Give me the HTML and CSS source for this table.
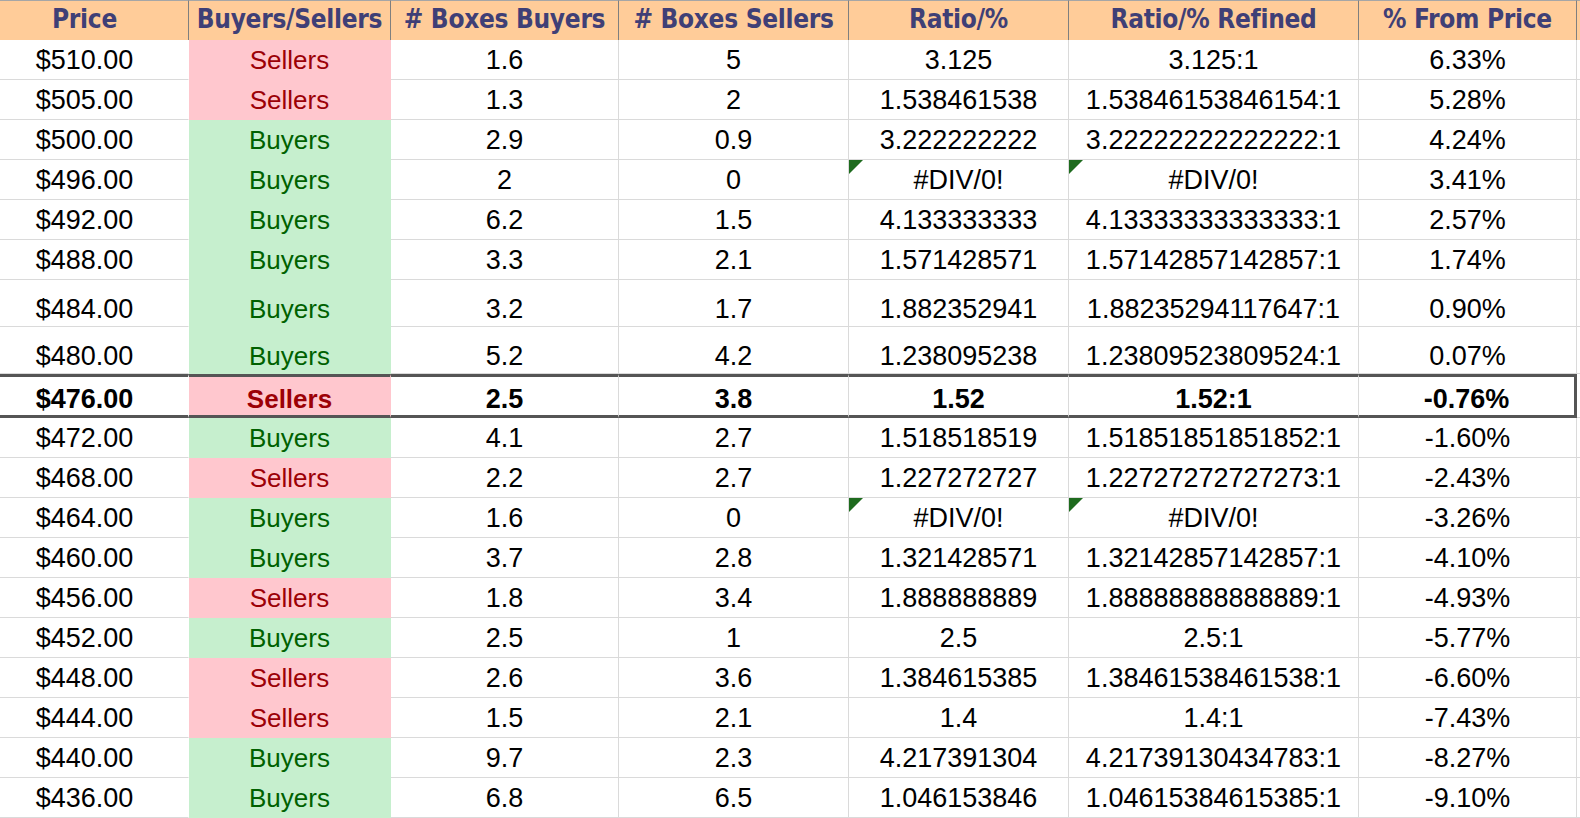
FILE: index.html
```html
<!DOCTYPE html>
<html lang="en">
<head>
<meta charset="utf-8">
<title>Price levels</title>
<link rel="stylesheet" href="styles.css">
</head>
<body>
<div class="sheet">
  <div class="row head">
    <div class="cell">Price</div>
    <div class="cell">Buyers/Sellers</div>
    <div class="cell"># Boxes Buyers</div>
    <div class="cell"># Boxes Sellers</div>
    <div class="cell">Ratio/%</div>
    <div class="cell">Ratio/% Refined</div>
    <div class="cell">% From Price</div>
    <div class="cell fill"></div>
  </div>

  <div class="row"><div class="cell price">$510.00</div><div class="cell bs sell">Sellers</div><div class="cell">1.6</div><div class="cell">5</div><div class="cell">3.125</div><div class="cell">3.125:1</div><div class="cell last">6.33%</div><div class="cell fill"></div></div>
  <div class="row"><div class="cell price">$505.00</div><div class="cell bs sell">Sellers</div><div class="cell">1.3</div><div class="cell">2</div><div class="cell">1.538461538</div><div class="cell">1.53846153846154:1</div><div class="cell last">5.28%</div><div class="cell fill"></div></div>
  <div class="row"><div class="cell price">$500.00</div><div class="cell bs buy">Buyers</div><div class="cell">2.9</div><div class="cell">0.9</div><div class="cell">3.222222222</div><div class="cell">3.22222222222222:1</div><div class="cell last">4.24%</div><div class="cell fill"></div></div>
  <div class="row"><div class="cell price">$496.00</div><div class="cell bs buy">Buyers</div><div class="cell">2</div><div class="cell">0</div><div class="cell err"><span class="flag"></span>#DIV/0!</div><div class="cell err"><span class="flag"></span>#DIV/0!</div><div class="cell last">3.41%</div><div class="cell fill"></div></div>
  <div class="row"><div class="cell price">$492.00</div><div class="cell bs buy">Buyers</div><div class="cell">6.2</div><div class="cell">1.5</div><div class="cell">4.133333333</div><div class="cell">4.13333333333333:1</div><div class="cell last">2.57%</div><div class="cell fill"></div></div>
  <div class="row"><div class="cell price">$488.00</div><div class="cell bs buy">Buyers</div><div class="cell">3.3</div><div class="cell">2.1</div><div class="cell">1.571428571</div><div class="cell">1.57142857142857:1</div><div class="cell last">1.74%</div><div class="cell fill"></div></div>
  <div class="row tall"><div class="cell price">$484.00</div><div class="cell bs buy">Buyers</div><div class="cell">3.2</div><div class="cell">1.7</div><div class="cell">1.882352941</div><div class="cell">1.88235294117647:1</div><div class="cell last">0.90%</div><div class="cell fill"></div></div>
  <div class="row tall"><div class="cell price">$480.00</div><div class="cell bs buy">Buyers</div><div class="cell">5.2</div><div class="cell">4.2</div><div class="cell">1.238095238</div><div class="cell">1.23809523809524:1</div><div class="cell last">0.07%</div><div class="cell fill"></div></div>
  <div class="row current"><div class="cell price">$476.00</div><div class="cell bs sell">Sellers</div><div class="cell">2.5</div><div class="cell">3.8</div><div class="cell">1.52</div><div class="cell">1.52:1</div><div class="cell last">-0.76%</div><div class="cell fill"></div></div>
  <div class="row"><div class="cell price">$472.00</div><div class="cell bs buy">Buyers</div><div class="cell">4.1</div><div class="cell">2.7</div><div class="cell">1.518518519</div><div class="cell">1.51851851851852:1</div><div class="cell last">-1.60%</div><div class="cell fill"></div></div>
  <div class="row"><div class="cell price">$468.00</div><div class="cell bs sell">Sellers</div><div class="cell">2.2</div><div class="cell">2.7</div><div class="cell">1.227272727</div><div class="cell">1.22727272727273:1</div><div class="cell last">-2.43%</div><div class="cell fill"></div></div>
  <div class="row"><div class="cell price">$464.00</div><div class="cell bs buy">Buyers</div><div class="cell">1.6</div><div class="cell">0</div><div class="cell err"><span class="flag"></span>#DIV/0!</div><div class="cell err"><span class="flag"></span>#DIV/0!</div><div class="cell last">-3.26%</div><div class="cell fill"></div></div>
  <div class="row"><div class="cell price">$460.00</div><div class="cell bs buy">Buyers</div><div class="cell">3.7</div><div class="cell">2.8</div><div class="cell">1.321428571</div><div class="cell">1.32142857142857:1</div><div class="cell last">-4.10%</div><div class="cell fill"></div></div>
  <div class="row"><div class="cell price">$456.00</div><div class="cell bs sell">Sellers</div><div class="cell">1.8</div><div class="cell">3.4</div><div class="cell">1.888888889</div><div class="cell">1.88888888888889:1</div><div class="cell last">-4.93%</div><div class="cell fill"></div></div>
  <div class="row"><div class="cell price">$452.00</div><div class="cell bs buy">Buyers</div><div class="cell">2.5</div><div class="cell">1</div><div class="cell">2.5</div><div class="cell">2.5:1</div><div class="cell last">-5.77%</div><div class="cell fill"></div></div>
  <div class="row"><div class="cell price">$448.00</div><div class="cell bs sell">Sellers</div><div class="cell">2.6</div><div class="cell">3.6</div><div class="cell">1.384615385</div><div class="cell">1.38461538461538:1</div><div class="cell last">-6.60%</div><div class="cell fill"></div></div>
  <div class="row"><div class="cell price">$444.00</div><div class="cell bs sell">Sellers</div><div class="cell">1.5</div><div class="cell">2.1</div><div class="cell">1.4</div><div class="cell">1.4:1</div><div class="cell last">-7.43%</div><div class="cell fill"></div></div>
  <div class="row"><div class="cell price">$440.00</div><div class="cell bs buy">Buyers</div><div class="cell">9.7</div><div class="cell">2.3</div><div class="cell">4.217391304</div><div class="cell">4.21739130434783:1</div><div class="cell last">-8.27%</div><div class="cell fill"></div></div>
  <div class="row"><div class="cell price">$436.00</div><div class="cell bs buy">Buyers</div><div class="cell">6.8</div><div class="cell">6.5</div><div class="cell">1.046153846</div><div class="cell">1.04615384615385:1</div><div class="cell last">-9.10%</div><div class="cell fill"></div></div>
  <div class="row"><div class="cell price"></div><div class="cell bs sell"></div><div class="cell"></div><div class="cell"></div><div class="cell"></div><div class="cell"></div><div class="cell last"></div><div class="cell fill"></div></div>
</div>
</body>
</html>
```

FILE: styles.css
```css
html, body {
  margin: 0;
  padding: 0;
  background: #ffffff;
  overflow: hidden;
  height: 818px;
}

.sheet {
  margin-left: -19px;
  font-family: "Liberation Sans", Arial, sans-serif;
  font-size: 27px;
  color: #000000;
}

.row {
  display: grid;
  grid-template-columns: 208px 202px 228px 230px 220px 290px 218px 60px;
  height: 40px;
}

.cell {
  box-sizing: border-box;
  display: flex;
  justify-content: center;
  align-items: flex-end;
  line-height: 36px;
  padding-bottom: 1px;
  border-right: 1px solid #dadada;
  border-bottom: 1px solid #dadada;
  white-space: nowrap;
  position: relative;
}

.price {
  border-right-color: transparent;
}

.bs {
  font-size: 26px;
}

.sell {
  background: #ffc7ce;
  color: #9c0006;
  border-color: #ffc7ce;
}

.buy {
  background: #c6efce;
  color: #006100;
  border-color: #c6efce;
}

/* header */
.head {
  height: 40px;
}

.head .cell {
  background: #ffcc99;
  color: #3f3f76;
  font-family: "DejaVu Sans Condensed", "Liberation Sans", sans-serif;
  font-weight: bold;
  font-size: 26px;
  letter-spacing: -0.3px;
  align-items: flex-start;
  line-height: 36px;
  padding-bottom: 0;
  border-top: 1px solid #a6a6a6;
  border-bottom: none;
  border-right: 1px solid #7f7f7f;
}

.head .fill {
  border-right: none;
}

/* taller rows */
.tall {
  height: 47px;
}

.tall .cell {
  line-height: 34px;
  padding-bottom: 0;
}

/* current price row */
.current {
  height: 44px;
}

.current .cell {
  font-weight: bold;
  border-top: 3px solid #555555;
  border-bottom: 3px solid #555555;
  line-height: 32px;
  padding-bottom: 0;
}

.current .last {
  border-right: 3px solid #555555;
}

.current .fill {
  border-top: none;
  border-bottom: 1px solid #dadada;
}

/* error indicator */
.flag {
  position: absolute;
  top: 0;
  left: 0;
  width: 0;
  height: 0;
  border-top: 14px solid #1e6b1e;
  border-right: 14px solid transparent;
}
```
